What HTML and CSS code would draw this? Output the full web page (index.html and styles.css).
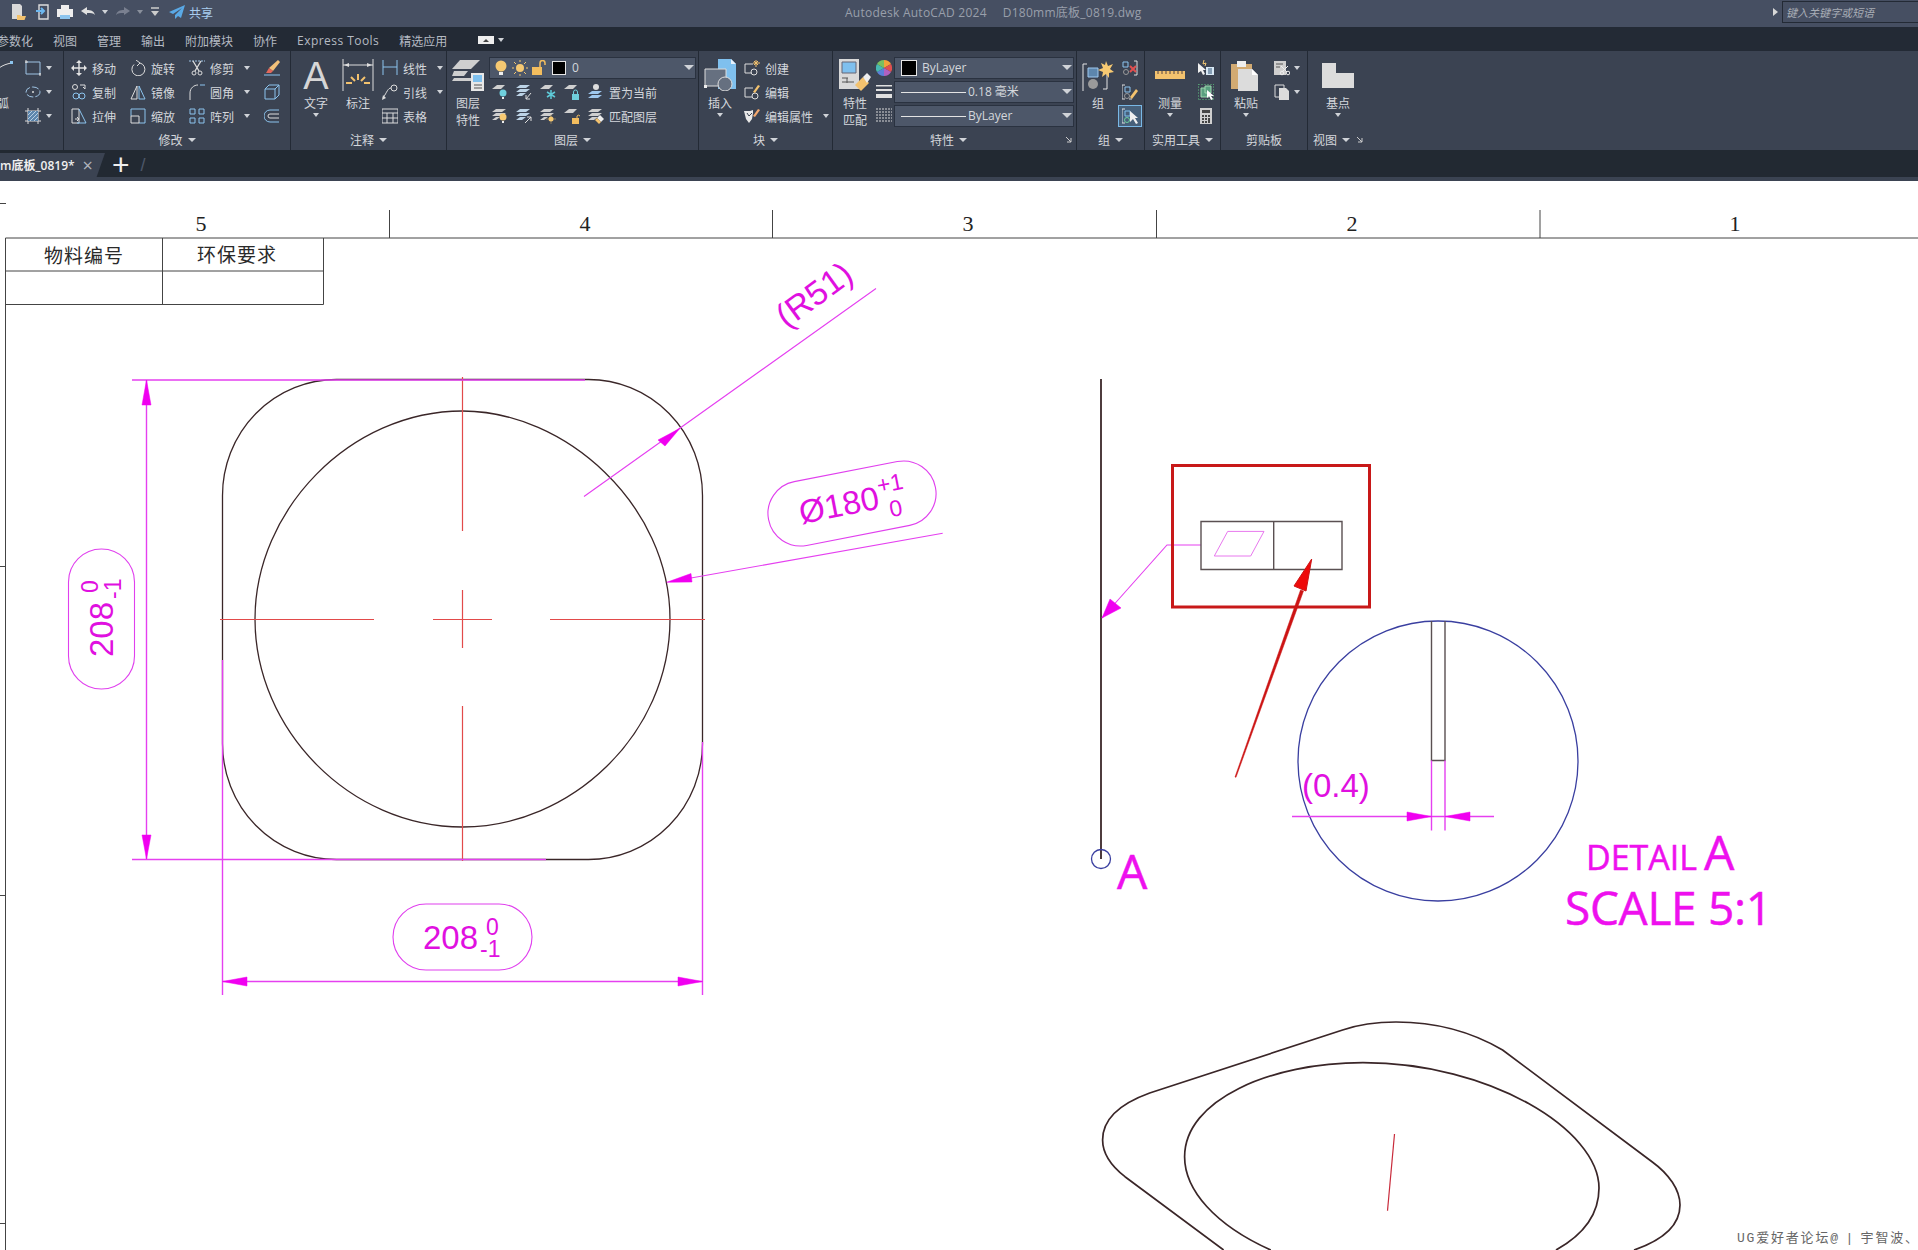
FILE: index.html
```html
<!DOCTYPE html>
<html lang="zh">
<head>
<meta charset="utf-8">
<title>Autodesk AutoCAD 2024</title>
<link rel="stylesheet" href="styles.css">
</head>
<body>
<div class="app">
<header class="titlebar">
  <div class="qat">
    <svg class="i qa1" viewBox="0 0 16 16"><path d="M2 0h8l2 2v13H2z" fill="#d9d9d9" stroke="none"/><path d="M7 11h3l1 1h5l-1.5 4H7z" fill="#f3c26e" stroke="none"/></svg>
    <svg class="i qa2" viewBox="0 0 16 16"><path d="M4 1h9v14H4z" stroke="#ddd" stroke-width="1.4"/><path d="M1 7h7M6 4l3 3-3 3" stroke="#6db8f0" stroke-width="2"/></svg>
    <svg class="i" viewBox="0 0 16 16"><path d="M4 1h8v4H4z" fill="#eee" stroke="none"/><path d="M0 5h16v8h-3v-2H3v2H0z" fill="#eee" stroke="none"/><path d="M3 11h10v4H3z" fill="#8cc4ee" stroke="none"/></svg>
    <svg class="i" viewBox="0 0 16 16"><path d="M1 7l6-4v3c4 0 7 1 8 5-2-2-4-2-8-2v2z" fill="#e0e0e0" stroke="none"/></svg>
    <i class="dd dd-q"></i>
    <svg class="i" viewBox="0 0 16 16"><path d="M15 7L9 3v3C5 6 2 7 1 11c2-2 4-2 8-2v2z" fill="#7a8090" stroke="none"/></svg>
    <i class="dd dd-q dim"></i>
    <svg class="i cust" viewBox="0 0 16 16"><path d="M4 4h8" stroke="#ccc" stroke-width="1.5"/><path d="M4 7h8l-4 5z" fill="#ccc" stroke="none"/></svg>
    <svg class="i" viewBox="0 0 16 16"><path d="M16 1L0 8l4 2 9-6-7 7v4l3-3 3 2z" fill="#5aa9e6" stroke="none"/></svg>
    <span class="share">共享</span>
  </div>
  <div class="doc">Autodesk AutoCAD 2024<span class="docname">D180mm底板_0819.dwg</span></div>
  <div class="searchwrap"><i class="tri-r"></i><div class="search">键入关键字或短语</div></div>
</header>

<nav class="menubar">
  <span>参数化</span><span>视图</span><span>管理</span><span>输出</span><span>附加模块</span><span>协作</span><span class="latin">Express Tools</span><span>精选应用</span>
  <b class="panelbtn"><i></i></b><i class="dd"></i>
</nav>

<section class="ribbon">
  <div class="panel p0">
    <div class="body">
      <div class="big big-clip">
        <div class="bi"><svg class="i32" viewBox="0 0 32 32"><path d="M14 9c4-3 8-4 12-5" stroke="#ddd"/><rect x="25" y="2" width="3" height="3" fill="#8cc4ee" stroke="none"/></svg></div>
        <span>圆弧</span>
      </div>
      <div class="col p0col">
        <div class="tool"><svg class="i" viewBox="0 0 16 16"><path d="M1 2h14v12H1z" stroke="#9fc4e4"/><path d="M0 2h3M14 14h2M1 0v3M15 13v3" stroke="#ddd"/></svg><i class="dd"></i></div>
        <div class="tool"><svg class="i" viewBox="0 0 16 16"><ellipse cx="8" cy="8" rx="7" ry="5" stroke="#9fc4e4" stroke-dasharray="7 2"/><circle cx="8" cy="8" r="1" fill="#ddd" stroke="none"/></svg><i class="dd"></i></div>
        <div class="tool"><svg class="i" viewBox="0 0 16 16"><path d="M3 0v16M13 0v16M0 3h16M0 13h16" stroke="#ddd"/><path d="M3 3h10v10H3z" fill="#5d86ad" stroke="none"/><path d="M3 7l4-4M3 11l8-8M5 13l8-8M9 13l4-4" stroke="#cfe2f2" stroke-width=".8"/></svg><i class="dd"></i></div>
      </div>
    </div>
    <div class="ptitle"></div>
  </div>

  <div class="panel p1">
    <div class="body grid-mod">
      <div class="tool"><svg class="i" viewBox="0 0 16 16"><path d="M8 1v14M1 8h14" stroke="#e4e4e4" stroke-width="1.4"/><path d="M8 0l-3 3h6zM8 16l-3-3h6zM0 8l3-3v6zM16 8l-3-3v6z" fill="#e4e4e4" stroke="none"/></svg><span>移动</span></div>
      <div class="tool"><svg class="i" viewBox="0 0 16 16"><path d="M10 3a6.500 6.500 0 1 1-6 1.500"/><path d="M6 0l4 3-3 3"/></svg><span>旋转</span></div>
      <div class="tool"><svg class="i" viewBox="0 0 16 16"><path d="M0 1h16" stroke="#9fc4e4" stroke-dasharray="2 1"/><path d="M4 1l6 10M12 1L6 11" stroke-width="1.3"/><circle cx="5" cy="13" r="2"/><circle cx="11" cy="13" r="2"/></svg><span>修剪</span><i class="dd"></i></div>
      <svg class="i" viewBox="0 0 16 16"><path d="M14 0l2 2-7 9-4-3z" fill="#f2c27a" stroke="none"/><path d="M5 8l4 3-2 2H2z" fill="#e2675a" stroke="none"/><path d="M0 15h16" stroke="#8cc4ee"/></svg>

      <div class="tool"><svg class="i" viewBox="0 0 16 16"><circle cx="4" cy="3" r="2.500"/><path d="M9 1h5v4M14 5l-2-2" stroke="#ddd"/><circle cx="5" cy="12" r="3" stroke="#8cc4ee"/><circle cx="11" cy="12" r="3" stroke="#8cc4ee"/></svg><span>复制</span></div>
      <div class="tool"><svg class="i" viewBox="0 0 16 16"><path d="M1 15L7 2v13z" stroke="#ddd"/><path d="M15 15L9 2v13z" stroke="#8cc4ee"/></svg><span>镜像</span></div>
      <div class="tool"><svg class="i" viewBox="0 0 16 16"><path d="M1 16V9c0-5 4-8 8-8" stroke="#ddd"/><path d="M11 1h5M1 13" stroke="#8cc4ee"/></svg><span>圆角</span><i class="dd"></i></div>
      <svg class="i" viewBox="0 0 16 16"><path d="M1 5h10v10H1zM1 5l4-4h10v10l-4 4M11 5l4-4" stroke="#8cc4ee"/></svg>

      <div class="tool"><svg class="i" viewBox="0 0 16 16"><path d="M1 1h7v14H1z" stroke="#ddd"/><path d="M8 1l7 14H6" stroke="#8cc4ee"/><path d="M4 11h4M6 9l2 2-2 2" stroke="#ddd"/></svg><span>拉伸</span></div>
      <div class="tool"><svg class="i" viewBox="0 0 16 16"><path d="M1 1h14v14H9" stroke="#8cc4ee"/><path d="M1 1v7" stroke="#8cc4ee"/><path d="M1 8h8v7H1z" stroke="#ddd"/></svg><span>缩放</span></div>
      <div class="tool"><svg class="i" viewBox="0 0 16 16"><path d="M1 1h5v5H1zM10 1h5v5h-5zM1 10h5v5H1zM10 10h5v5h-5z" stroke="#8cc4ee"/></svg><span>阵列</span><i class="dd"></i></div>
      <svg class="i" viewBox="0 0 16 16"><path d="M15 2H6a5.500 5.500 0 0 0 0 12h9" stroke="#8cc4ee"/><path d="M15 6H6a2 2 0 0 0 0 4h9" stroke="#ddd"/></svg>
    </div>
    <div class="ptitle">修改<i class="dd"></i></div>
  </div>

  <div class="panel p2">
    <div class="body flexbody">
      <div class="big">
        <div class="bi biga">A</div>
        <span>文字</span><i class="dd"></i>
      </div>
      <div class="big">
        <div class="bi"><svg class="i32" viewBox="0 0 32 32"><path d="M1 0v32M31 0v32M1 6h30" stroke="#ddd"/><path d="M2 6l5-2v4zM30 6l-5-2v4z" fill="#ddd" stroke="none"/><path d="M16 15v6M9 18l4 4M23 18l-4 4M4 24h6M22 24h6" stroke="#f3c26e" stroke-width="2"/></svg></div>
        <span>标注</span>
      </div>
      <div class="col">
        <div class="tool"><svg class="i" viewBox="0 0 16 16"><path d="M1 0v15M15 0v15M1 7h14" stroke="#8cc4ee"/></svg><span>线性</span><i class="dd"></i></div>
        <div class="tool"><svg class="i" viewBox="0 0 16 16"><circle cx="12" cy="4" r="3" stroke="#ddd"/><path d="M9 4C6 4 5 8 1 14" stroke="#ddd"/><path d="M0 16l1-5 3 3z" fill="#ddd" stroke="none"/></svg><span>引线</span><i class="dd"></i></div>
        <div class="tool"><svg class="i" viewBox="0 0 16 16"><path d="M0 1h16v14H0zM0 5h16M0 10h16M5 5v10M11 5v10"/></svg><span>表格</span></div>
      </div>
    </div>
    <div class="ptitle">注释<i class="dd"></i></div>
  </div>

  <div class="panel p3">
    <div class="body flexbody">
      <div class="big big2">
        <div class="bi"><svg class="i32" viewBox="0 0 32 32"><path d="M8 1h20l-9 9H0z" fill="#cfcfcf" stroke="none"/><path d="M2 12h14l-4 5H0zM2 19h18v3H0z" fill="#cfcfcf" stroke="none"/><path d="M19 14h13v18H19z" fill="#e8e8e8" stroke="none"/><path d="M21 16h9v7h-9z" fill="#7fc0ee" stroke="none"/><path d="M22 26h8M22 29h8" stroke="#555"/></svg></div>
        <span>图层</span><span>特性</span>
      </div>
      <div class="layers">
        <div class="combo lcombo">
          <svg class="i" viewBox="0 0 16 16"><circle cx="8" cy="6" r="5.500" fill="#f6c972" stroke="none"/><path d="M6 12h4v3H6z" fill="#eee" stroke="none"/></svg>
          <svg class="i" viewBox="0 0 16 16"><circle cx="8" cy="8" r="4" fill="#f6c972" stroke="none"/><path d="M8 0v2M8 14v2M0 8h2M14 8h2M2 2l2 2M12 12l2 2M14 2l-2 2M2 14l2-2" stroke="#f6c972"/></svg>
          <svg class="i" viewBox="0 0 16 16"><path d="M1 7h10v8H1z" fill="#f3bd5e" stroke="none"/><path d="M9 7V3a2.500 2.500 0 0 1 5 0v2" stroke="#f3bd5e" stroke-width="1.500"/></svg>
          <i class="swatch"></i><span>0</span><i class="dd dd-c"></i>
        </div>
        <div class="lrow">
          <svg class="i" viewBox="0 0 16 16"><path d="M5 1h8L9 5H0z" fill="#cfcfcf" stroke="none"/><circle cx="11" cy="9" r="3.500" fill="#6fd0dd" stroke="none"/><path d="M10 13h2v2h-2z" fill="#eee" stroke="none"/></svg>
          <svg class="i" viewBox="0 0 16 16"><path d="M4 1h10l-4 3H0zM4 5h10l-4 3H0zM4 9h6l-4 3H0z" fill="#bcd3e6" stroke="none"/><path d="M15 9l-5 6M10 11v4h4" stroke="#ddd"/></svg>
          <svg class="i" viewBox="0 0 16 16"><path d="M5 1h8L9 5H0z" fill="#cfcfcf" stroke="none"/><path d="M11 6v9M7 8l8 5M15 8l-8 5" stroke="#5ecad8" stroke-width="1.500"/></svg>
          <svg class="i" viewBox="0 0 16 16"><path d="M5 1h8L9 5H0z" fill="#cfcfcf" stroke="none"/><path d="M8 10h7v6H8z" fill="#6fd0dd" stroke="none"/><path d="M9.500 10V8a2 2 0 0 1 4 0v2" stroke="#6fd0dd"/></svg>
          <svg class="i" viewBox="0 0 16 16"><path d="M4 7h10l-4 3H0z" fill="#9fc8ee" stroke="none"/><path d="M4 11h10l-4 3H0z" fill="#9fc8ee" stroke="none"/><circle cx="8" cy="3" r="3" fill="#ddd" stroke="none"/></svg>
          <span>置为当前</span>
        </div>
        <div class="lrow">
          <svg class="i" viewBox="0 0 16 16"><path d="M4 1h10l-4 3H0zM4 5h10l-4 3H0zM4 9h4l-4 3H0z" fill="#cfcfcf" stroke="none"/><circle cx="11" cy="9" r="3.500" fill="#f6c972" stroke="none"/><path d="M10 13h2v2h-2z" fill="#eee" stroke="none"/></svg>
          <svg class="i" viewBox="0 0 16 16"><path d="M4 1h10l-4 3H0zM4 5h10l-4 3H0zM4 9h6l-4 3H0z" fill="#bcd3e6" stroke="none"/><path d="M9 15l6-6M11 9h4v4" stroke="#ddd"/></svg>
          <svg class="i" viewBox="0 0 16 16"><path d="M4 1h10l-4 3H0zM4 5h10l-4 3H0zM4 9h4l-4 3H0z" fill="#cfcfcf" stroke="none"/><circle cx="11" cy="11" r="2.500" fill="#f6c972" stroke="none"/><path d="M11 6.500v9M6.500 11h9" stroke="#f6c972" stroke-width=".8" stroke-dasharray="1 1"/></svg>
          <svg class="i" viewBox="0 0 16 16"><path d="M5 1h8L9 5H0z" fill="#cfcfcf" stroke="none"/><path d="M8 10h7v6H8z" fill="#f3bd5e" stroke="none"/><path d="M13 10V8a2 2 0 0 1 3 0" stroke="#f3bd5e"/></svg>
          <svg class="i" viewBox="0 0 16 16"><path d="M4 1h10l-4 3H0zM4 5h10l-4 3H0zM4 9h6l-4 3H0z" fill="#cfcfcf" stroke="none"/><path d="M9 10l3-3 4 4-3 3z" fill="#eee" stroke="none"/><path d="M9 10l4 4-2 2-4-4z" fill="#f3c26e" stroke="none"/></svg>
          <span>匹配图层</span>
        </div>
      </div>
    </div>
    <div class="ptitle">图层<i class="dd"></i></div>
  </div>

  <div class="panel p4">
    <div class="body flexbody">
      <div class="big">
        <div class="bi"><svg class="i32" viewBox="0 0 32 32"><path d="M14 0h13l5 5v25H14z" fill="#7fc0ee" stroke="none"/><path d="M27 0v5h5z" fill="#e8f2fb" stroke="none"/><path d="M1 10h21v17H1z" fill="#667080" stroke="#ddd"/><circle cx="21" cy="25" r="7" fill="#667080" stroke="#ddd"/><rect x="0" y="26" width="3" height="3" fill="#eee" stroke="none"/></svg></div>
        <span>插入</span><i class="dd"></i>
      </div>
      <div class="col">
        <div class="tool"><svg class="i" viewBox="0 0 16 16"><path d="M9 4H1v9h7" stroke="#ddd"/><circle cx="10" cy="12" r="3" stroke="#ddd"/><path d="M12 0v7M9 3h7M10 1l4 4M14 1l-4 4" stroke="#f3c26e"/></svg><span>创建</span></div>
        <div class="tool"><svg class="i" viewBox="0 0 16 16"><path d="M9 4H1v9h7" stroke="#ddd"/><circle cx="11" cy="12" r="3" stroke="#ddd"/><path d="M9 8l5-7 2 1-5 7z" fill="#f3c26e" stroke="none"/></svg><span>编辑</span></div>
        <div class="tool"><svg class="i" viewBox="0 0 16 16"><path d="M0 3h6l3-1v3l-1 6-3 4-3-4z" fill="#e8e8e8" stroke="none"/><path d="M3 5l2 3 3-3" stroke="#3b4352"/><path d="M9 8l5-7 2 1-5 7z" fill="#f3a86e" stroke="none"/></svg><span>编辑属性</span><i class="dd"></i></div>
      </div>
    </div>
    <div class="ptitle">块<i class="dd"></i></div>
  </div>

  <div class="panel p5">
    <div class="body flexbody">
      <div class="big big2">
        <div class="bi"><svg class="i32" viewBox="0 0 32 32"><path d="M0 0h20v30H0z" fill="#d9d9d9" stroke="none"/><path d="M3 3h14v11H3z" fill="#7fc0ee" stroke="#667"/><path d="M3 19h6M3 23h12M8 19v5" stroke="#555"/><path d="M16 26l8-8 6 6-8 8z" fill="#f3c26e" stroke="none"/><path d="M24 18l4-4 4 4-4 6z" fill="#eee" stroke="none"/></svg></div>
        <span>特性</span><span>匹配</span>
      </div>
      <div class="col swcol">
        <svg class="i" viewBox="0 0 16 16"><path d="M8 8V0a8 8 0 0 1 7 4z" fill="#f2a23a" stroke="none"/><path d="M8 8l7-4a8 8 0 0 1 0 8z" fill="#e05050" stroke="none"/><path d="M8 8l7 4a8 8 0 0 1-7 4z" fill="#b060c0" stroke="none"/><path d="M8 8v8a8 8 0 0 1-7-4z" fill="#5a80d8" stroke="none"/><path d="M8 8l-7 4a8 8 0 0 1 0-8z" fill="#48b8b0" stroke="none"/><path d="M8 8L1 4a8 8 0 0 1 7-4z" fill="#78c060" stroke="none"/></svg>
        <svg class="i" viewBox="0 0 16 16"><path d="M0 1h16v1.500H0zM0 5h16v2H0zM0 10h16v4H0z" fill="#e0e0e0" stroke="none"/></svg>
        <svg class="i" viewBox="0 0 16 16"><path d="M0 1h16M0 4h16M0 7h16M0 10h16M0 13h16" stroke="#d8d8d8" stroke-dasharray="2 1"/></svg>
      </div>
      <div class="combos">
        <div class="combo"><i class="swatch sw-big"></i><span>ByLayer</span><i class="dd dd-c"></i></div>
        <div class="combo"><i class="lw"></i><span>0.18 毫米</span><i class="dd dd-c"></i></div>
        <div class="combo"><i class="lw"></i><span>ByLayer</span><i class="dd dd-c"></i></div>
      </div>
    </div>
    <div class="ptitle pt-prop">特性<i class="dd"></i><svg class="launch" viewBox="0 0 8 8"><path d="M1 1l5 5M6 2v4H2" stroke="#ccc" fill="none"/></svg></div>
  </div>

  <div class="panel p6">
    <div class="body flexbody">
      <div class="big">
        <div class="bi"><svg class="i32" viewBox="0 0 32 32"><path d="M5 5H1v28h4M21 30h4v-16" stroke="#e4e4e4" fill="none"/><path d="M6 9h10v9H6z" fill="#5d86ad" stroke="#9fc8ee"/><circle cx="11" cy="25" r="5" fill="#9a9a9a" stroke="none"/><path d="M24 2l2 5 5-2-3 5 4 3-5 1 0 5-3-4-4 3 1-5-5-2 5-2-2-5 4 2z" fill="#f6c972" stroke="none"/></svg></div>
        <span>组</span>
      </div>
      <div class="col gcol">
        <svg class="i" viewBox="0 0 16 16"><path d="M12 1h3v14h-3" stroke="#ddd"/><path d="M1 2h5v5H1z" stroke="#8cc4ee"/><circle cx="4" cy="12" r="2.500" stroke="#9a9a9a"/><path d="M8 6l6 6M14 6l-6 6" stroke="#e05050" stroke-width="2"/></svg>
        <svg class="i" viewBox="0 0 16 16"><path d="M3 1H0v14h3M7 15h3" stroke="#ddd"/><path d="M3 3h5v5H3z" stroke="#8cc4ee"/><circle cx="5" cy="12" r="2.500" stroke="#9a9a9a"/><path d="M8 13l6-8 2 2-6 8z" fill="#f3c26e" stroke="none"/></svg>
        <div class="gsel"><svg class="i" viewBox="0 0 16 16"><path d="M3 1H0v14h3" stroke="#ddd"/><path d="M3 3h5v5H3z" stroke="#7fc0ee"/><circle cx="5" cy="12" r="2.500" stroke="#6fcf9f"/><path d="M8 3v11l3-3 3 5 2-1-3-5h3z" fill="#f0f0f0" stroke="none"/></svg></div>
      </div>
    </div>
    <div class="ptitle">组<i class="dd"></i></div>
  </div>

  <div class="panel p7">
    <div class="body flexbody">
      <div class="big">
        <div class="bi"><svg class="ruler" viewBox="0 0 30 8"><path d="M0 0h30v8H0z" fill="#f3c26e" stroke="none"/><path d="M3 0v3M7 0v3M11 0v3M15 0v3M19 0v3M23 0v3M27 0v3" stroke="#544"/></svg></div>
        <span>测量</span><i class="dd"></i>
      </div>
      <div class="col">
        <svg class="i" viewBox="0 0 16 16"><path d="M0 3v10l3-2 2 4 2-1-2-4h3z" fill="#f0f0f0" stroke="none"/><path d="M8 7h8v8H8z" fill="#d8e8f4" stroke="none"/><path d="M10 9h4M10 11h4M10 13h4" stroke="#357"/><path d="M6 0l-1 4 3-1-1 3" stroke="#f6c972"/></svg>
        <svg class="i" viewBox="0 0 16 16"><path d="M0 0h16v16H0z" stroke="#60c080" stroke-dasharray="2 1"/><path d="M3 4h8v9H3z" fill="#5aa080" stroke="#9fd8b0"/><path d="M7 2h6v7H7z" fill="#5aa080" stroke="#9fd8b0"/><path d="M9 6v8l2-2 2 4 2-1-2-3h3z" fill="#fff" stroke="none"/></svg>
        <svg class="i" viewBox="0 0 16 16"><path d="M2 0h12v16H2z" fill="#cfcfcf" stroke="none"/><path d="M4 2h8v3H4z" fill="#444" stroke="none"/><path d="M4 7h2v2H4zM7 7h2v2H7zM10 7h2v2h-2zM4 10h2v2H4zM7 10h2v2H7zM10 10h2v5h-2zM4 13h2v2H4zM7 13h2v2H7z" fill="#444" stroke="none"/></svg>
      </div>
    </div>
    <div class="ptitle">实用工具<i class="dd"></i></div>
  </div>

  <div class="panel p8">
    <div class="body flexbody">
      <div class="big">
        <div class="bi"><svg class="i32" viewBox="0 0 32 32"><path d="M1 5h21v25H1z" fill="#d2aa72" stroke="none"/><path d="M7 2h9v6H7z" fill="#eee" stroke="none"/><path d="M8 10h14l6 6v16H8z" fill="#dcdcdc" stroke="none"/><path d="M22 10v6h6z" fill="#fff" stroke="none"/></svg></div>
        <span>粘贴</span><i class="dd"></i>
      </div>
      <div class="col clipcol">
        <div class="tool"><svg class="i" viewBox="0 0 16 16"><path d="M0 1h12v14H0z" fill="#cfcfcf" stroke="none"/><path d="M2 4h7M2 7h4" stroke="#555"/><path d="M7 6l6 6M14 6l-6 6" stroke="#eee"/><circle cx="8" cy="13" r="1.800" stroke="#eee"/><circle cx="14" cy="13" r="1.800" stroke="#eee"/></svg><i class="dd"></i></div>
        <div class="tool"><svg class="i" viewBox="0 0 16 16"><path d="M1 1h9v12H1z" stroke="#ddd"/><path d="M5 4h7l3 3v9H5z" fill="#dcdcdc" stroke="none"/></svg><i class="dd"></i></div>
      </div>
    </div>
    <div class="ptitle"><span>剪贴板</span></div>
  </div>

  <div class="panel p9">
    <div class="body flexbody">
      <div class="big">
        <div class="bi"><svg class="i32" viewBox="0 0 32 32"><path d="M0 4h14v10h18v15H0z" fill="#dcdcdc" stroke="none"/></svg></div>
        <span>基点</span><i class="dd"></i>
      </div>
    </div>
    <div class="ptitle pt-view">视图<i class="dd"></i><svg class="launch" viewBox="0 0 8 8"><path d="M1 1l5 5M6 2v4H2" stroke="#ccc" fill="none"/></svg></div>
  </div>
</section>

<div class="tabbar">
  <div class="tab"><span>m底板_0819*</span><b class="close">×</b></div>
  <b class="plus">+</b><i class="slash">/</i>
</div>
<div class="strip"></div>

<svg class="canvas" viewBox="0 181 1918 1069">
  <!-- drawing border -->
  <path class="frame" d="M5.500 1250V238H1918M389.500 238V210M772.500 238V210M1156.500 238V210M1540 238V210M0 203.500H6M0 566.500H5M0 895.500H5M0 1223.500H5"/>
  <path class="frame" d="M5.500 271H323.500M5.500 304.500H323.500M162.500 238V304.500M323.500 238V304.500"/>
  <text class="num" x="201" y="231">5</text><text class="num" x="585" y="231">4</text><text class="num" x="968" y="231">3</text><text class="num" x="1352" y="231">2</text><text class="num" x="1735" y="231">1</text>
  <text class="cell" x="84" y="263">物料编号</text><text class="cell" x="237" y="262">环保要求</text>

  <!-- front view -->
  <rect class="ol" x="222.500" y="379.500" width="480" height="480" rx="114" ry="116"/>
  <path class="ol" d="M462.500 411C565 411 670 505 670 619C670 735 570 827 462.500 827C350 827 255 730 255 619C255 510 350 411 462.500 411Z"/>
  <path class="ctr" d="M462.500 377V531M462.500 590V648M462.500 706V861M220 619.500H374M433 619.500H492M550 619.500H705"/>

  <!-- dimensions -->
  <path class="dim" d="M132 380H585M132 859.500H546M146.500 380V859M222.500 660V995M702.500 742V995M222.500 981.500H702.500"/>
  <path class="arr" d="M146.500 380L142 405H151ZM146.500 859L142 835H151ZM222.500 981.500L247 977V986ZM702.500 981.500L678 977V986Z"/>
  <rect class="oval" x="68.500" y="549" width="66" height="140" rx="33"/>
  <g transform="translate(101 619) rotate(-90)">
    <text class="dt" x="-38" y="12">208</text><text class="dts" x="26" y="-3">0</text><text class="dts" x="20" y="20">-1</text>
  </g>
  <rect class="oval" x="393" y="904" width="139" height="66" rx="33"/>
  <text class="dt" x="423" y="949">208</text><text class="dts" x="486" y="935">0</text><text class="dts" x="480" y="957">-1</text>

  <path class="dim thin" d="M584 496.500L876 288.500M942.700 533.300L691 578"/>
  <path class="arr" d="M680 428.300L658 440L665 446ZM666.700 582.300L691 573.500L692 582Z"/>
  <text class="dtm dtr" transform="translate(821 304) rotate(-36)" x="0" y="0">(R51)</text>
  <g transform="translate(852 503.500) rotate(-11)">
    <rect class="oval" x="-85" y="-32.500" width="170" height="65" rx="32.500"/>
    <text class="dtm" x="-13" y="10.500">Ø180</text><text class="dtsm" x="41" y="-4.700">+1</text><text class="dtsm" x="42" y="20.800">0</text>
  </g>

  <!-- side view -->
  <path class="ol thick" d="M1101 379V859"/>
  <circle class="bl" cx="1101" cy="859" r="9.500"/>
  <text class="big-a" x="1117" y="889">A</text>
  <path class="dim thin" d="M1201 545H1167L1102 618"/>
  <path class="arr" d="M1102 618L1110 599L1121 608Z"/>
  <path class="ol grey" d="M1201 521.500H1342V569.500H1201ZM1273.700 521.500V569.500"/>
  <path class="par" d="M1227.700 531.400H1264L1250.700 556H1214.300Z"/>
  <rect class="redbox" x="1172.500" y="465.500" width="197" height="141.500"/>
  <path class="redline" d="M1235 777L1236 777.300L1303.500 591L1300.500 590Z"/>
  <path class="redhead" d="M1311.700 559L1294 586L1306 591Z"/>

  <!-- detail -->
  <circle class="bl" cx="1438" cy="761" r="140"/>
  <path class="ol grey" d="M1431.500 621V760.500H1445V621"/>
  <path class="dim" d="M1431.500 760.500V830.500M1445 760.500V830.500M1292 816.500H1494"/>
  <path class="arr" d="M1431.500 816.500L1407 812V821ZM1445 816.500L1470 812V821Z"/>
  <text class="dt04" x="1302" y="797">(0.4)</text>
  <text class="det" x="1586" y="870">DETAIL</text><text class="big-a" x="1704" y="870">A</text>
  <text class="scale" x="1565" y="925">SCALE 5:1</text>

  <!-- iso view -->
  <path class="ol iso" d="M1223.600 1250L1125 1176.700C1110 1165 1102.600 1152 1102.600 1140C1102.600 1118 1122 1103 1149.700 1093L1342.600 1030C1360 1024 1378 1022 1396 1022C1435 1022 1472 1032 1502.600 1050L1652 1161.700C1669 1174 1680 1190 1680 1205C1680 1226 1663 1240 1634 1250"/>
  <path class="ol iso" d="M1270.800 1250C1215 1225 1184.600 1190 1184.600 1156.700C1184.600 1100 1270 1062.700 1363 1062.700C1490 1062.700 1599 1130 1599 1188C1599 1215 1583 1235 1556 1250"/>
  <path class="isoc" d="M1394.500 1134L1387.500 1210.700"/>

  <text class="wm" x="1737" y="1242">UG爱好者论坛@ | 宇智波、</text>
</svg>
</div>
</body>
</html>
```
FILE: styles.css
```css
* { box-sizing: border-box; }
html, body { margin: 0; height: 100%; overflow: hidden; background: #fff; }
body { font-family: "Noto Sans CJK SC", "Open Sans", sans-serif; font-size: 12px; color: #d4d7dc; }
.app { width: 1918px; height: 1250px; display: flex; flex-direction: column; overflow: hidden; }
i { font-style: normal; }

.i { width: 16px; height: 16px; flex: none; fill: none; stroke: #dcdcdc; display: block; }
.i32 { width: 32px; height: 32px; fill: none; stroke: #dcdcdc; display: block; }

/* title bar */
.titlebar { height: 27px; flex: none; display: flex; align-items: center; background: #464f62; padding-bottom: 3px; }
.qat { width: 845px; display: flex; align-items: center; gap: 4px; padding-left: 10px; flex: none; }
.qat .i { margin-right: 3px; }
.qat .qa1 { margin-right: 5px; }
.qat .qa2 { margin-right: 2px; }
.qat .cust { margin-right: 2px; }
.share { color: #a9cdef; margin-left: -3px; }
.doc { font-family: "Open Sans", "Noto Sans CJK SC", sans-serif; color: #999fab; font-size: 12px; letter-spacing: .25px; white-space: nowrap; }
.docname { margin-left: 16px; }
.searchwrap { margin-left: auto; display: flex; align-items: center; gap: 4px; margin-right: -12px; }
.tri-r { width: 0; height: 0; border-left: 5px solid #d8d8d8; border-top: 4px solid transparent; border-bottom: 4px solid transparent; }
.search { width: 148px; height: 22px; border: 1px solid #232a35; background: #464f62; color: #a8adb6; font-style: italic; font-size: 11px; line-height: 20px; padding-left: 3px; }

/* menu */
.menubar { height: 24px; flex: none; background: #232a35; display: flex; align-items: center; gap: 20px; color: #b5bac3; white-space: nowrap; padding-top: 2px; }
.menubar span:first-child { margin-left: -3px; }
.menubar .latin { font-family: "Open Sans", sans-serif; letter-spacing: .45px; }
.menubar .panelbtn { width: 16px; height: 8px; background: #eee; margin-left: 11px; display: flex; align-items: center; justify-content: center; }
.panelbtn i { width: 0; height: 0; border-left: 3px solid transparent; border-right: 3px solid transparent; border-bottom: 3px solid #444; }
.menubar > .dd { margin-left: -16px; }

/* dropdown triangle */
.dd { display: block; flex: none; width: 0; height: 0; border-left: 3.500px solid transparent; border-right: 3.500px solid transparent; border-top: 4px solid #d0d3d8; }
.dd.dim { border-top-color: #8a909c; margin-right: 0; }
.dd-q { margin: 0 3px 0 -1px; }
.dd-c { margin-left: auto; margin-right: 1px; border-left-width: 5px; border-right-width: 5px; border-top-width: 5px; }

/* ribbon */
.ribbon { height: 99px; flex: none; background: #3b4352; display: flex; overflow: hidden; }
.panel { flex: none; display: flex; flex-direction: column; border-right: 1px solid #232a35; position: relative; white-space: nowrap; }
.body { flex: none; height: 77px; padding-top: 5px; }
.flexbody { display: flex; }
.ptitle { flex: 1; display: flex; align-items: center; justify-content: center; gap: 5px; color: #d4d7dc; position: relative; padding-top: 1px; }
.ptitle .dd { border-left-width: 4px; border-right-width: 4px; }
.p0 { width: 64px; } .p1 { width: 227px; } .p2 { width: 156px; } .p3 { width: 252px; } .p4 { width: 134px; }
.p5 { width: 244px; } .p6 { width: 68px; } .p7 { width: 76px; } .p8 { width: 87px; }
.p9 { flex: 1; border-right: 0; }
.p0 .body { display: flex; }

.tool { display: flex; align-items: center; gap: 5px; height: 24px; }
.tool > .dd { margin-left: 5px; }
.col { display: grid; grid-template-rows: repeat(3, 24px); align-items: center; }
.col > .i { align-self: center; }

.big { width: 32px; flex: none; display: flex; flex-direction: column; align-items: center; }
.big .bi { height: 38px; padding-top: 3px; width: 32px; }
.big span { line-height: 17px; }
.big .dd { margin-top: 2px; }
.biga { font-family: "Liberation Sans", sans-serif; font-size: 38px; line-height: 34px; color: #d6d6d6; text-align: center; }

.big-clip { width: 24px; margin-left: -15px; align-items: flex-start; }
.p0col { margin-left: 16px; }
.p0col .tool { gap: 0; }

.grid-mod { display: grid; grid-template-columns: 59px 59px 75px 16px; grid-auto-rows: 24px; padding-left: 7px; align-items: center; }

.p2 .flexbody { padding-left: 9px; gap: 10px; }
.p2 .col { margin-left: -2px; }
.p3 .flexbody { padding-left: 5px; }
.layers { margin-left: 5px; width: 207px; display: grid; grid-template-rows: repeat(3, 24px); align-items: center; }
.lrow { display: flex; align-items: center; gap: 8px; padding-left: 3px; }
.lrow span { margin-left: -3px; }
.combo { height: 22px; background: #4d5769; border: 1px solid #2a3240; display: flex; align-items: center; padding: 0 0 2px 6px; color: #d4d7dc; font-family: "Open Sans", "Noto Sans CJK SC", sans-serif; font-size: 12px; }
.combo > .i, .combo > .swatch, .combo > .lw { position: relative; top: 1px; }
.lcombo { gap: 3px; padding-left: 3px; }
.lcombo span { margin-left: 3px; }
.swatch { width: 14px; height: 14px; background: #000; border: 1px solid #e6e6e6; flex: none; margin-left: 2px; }
.sw-big { width: 16px; height: 16px; margin: 0 5px 0 0; }
.lw { width: 65px; height: 1px; background: #e4e4e4; margin-right: 2px; flex: none; }

.p4 .flexbody { padding-left: 5px; gap: 8px; }
.p5 .flexbody { padding-left: 6px; }
.swcol { margin-left: 5px; }
.combos { margin-left: 2px; width: 180px; display: grid; grid-template-rows: repeat(3, 24px); align-items: center; }
.pt-prop { padding-right: 12px; }
.launch { position: absolute; width: 8px; height: 8px; top: 8px; }
.pt-prop .launch { right: 3px; }
.pt-view { justify-content: flex-start; padding-left: 5px; }
.pt-view .launch { left: 48px; }

.p6 .flexbody { padding-left: 5px; }
.gcol { margin-left: 4px; justify-items: center; width: 24px; }
.gsel { width: 24px; height: 22px; border: 1px solid #79b8e6; background: #47607a; display: flex; align-items: center; justify-content: center; }

.p7 .flexbody { padding-left: 9px; gap: 12px; }
.ruler { width: 30px; height: 8px; display: block; margin: 12px auto 0; }
.p8 .flexbody { padding-left: 9px; gap: 12px; }
.clipcol { grid-template-rows: repeat(2, 24px); }
.clipcol .tool { gap: 0; }
.clipcol .dd { margin-left: 4px; }
.p9 .flexbody { padding-left: 14px; }

/* tabs */
.tabbar { height: 27px; flex: none; background: #222932; display: flex; align-items: flex-end; }
.tab { height: 24px; width: 105px; background: #3b4352; clip-path: polygon(0 0, 100% 0, 92% 100%, 0 100%); display: flex; align-items: center; color: #f0f0f0; font-family: "Open Sans", "Noto Sans CJK SC", sans-serif; font-weight: 600; white-space: nowrap; }
.close { margin-left: 8px; color: #b0b4bc; font-size: 18px; font-weight: 400; line-height: 1; }
.plus { margin-left: 7px; color: #eee; font-family: "Liberation Sans", sans-serif; font-size: 30px; font-weight: 400; line-height: 24px; height: 24px; }
.slash { margin-left: 11px; color: #4d5769; font-family: "Liberation Sans", sans-serif; font-size: 18px; line-height: 24px; height: 24px; }
.strip { height: 4px; flex: none; background: #3b4352; }

/* drawing */
.canvas { width: 1918px; height: 1069px; display: block; flex: none; background: #fff; }
.canvas path, .canvas rect, .canvas circle { fill: none; }
.frame { stroke: #444; stroke-width: 1; }
.num { font-family: "Liberation Serif", serif; font-size: 22px; fill: #222; text-anchor: middle; }
.cell { font-family: "Noto Sans CJK SC", sans-serif; font-size: 19px; letter-spacing: 1px; fill: #2a2a2a; text-anchor: middle; }
.ol { stroke: #3a2628; stroke-width: 1.300; }
.ol.thick { stroke-width: 1.800; }
.ol.grey { stroke: #5a5052; stroke-width: 1.400; }
.ol.iso { stroke-width: 1.700; }
.ctr { stroke: #e24a4a; stroke-width: 1.200; }
.isoc { stroke: #c82a3a; stroke-width: 1.200; }
.dim { stroke: #e540f0; stroke-width: 1.400; }
.dim.thin { stroke-width: 1.100; }
.canvas .arr { fill: #f000f0; stroke: #f000f0; stroke-width: .5; }
.oval { stroke: #e040ee; stroke-width: 1.100; }
.bl { stroke: #3a3fa0; stroke-width: 1.300; }
.par { stroke: #e878ee; stroke-width: 1; }
.redbox { stroke: #c81818; stroke-width: 3; }
.canvas .redline { fill: #cc1414; stroke: #cc1414; stroke-width: .5; }
.canvas .redhead { fill: #ee0a0a; stroke: #cc1414; stroke-width: 1; }
.dt, .dts, .dtm, .dtsm, .dt04 { font-family: "Liberation Sans", sans-serif; fill: #e010e0; }
.dt { font-size: 33px; }
.dts { font-size: 23px; }
.dtm { font-size: 33px; text-anchor: middle; }
.dtr { font-size: 34px; }
.dtsm { font-size: 23px; text-anchor: middle; }
.dt04 { font-size: 33px; }
.big-a, .det, .scale { font-family: "Open Sans", sans-serif; fill: #ee10ee; stroke: #ee10ee; stroke-width: .5; }
.big-a { font-size: 48px; }
.det { font-size: 34px; }
.scale { font-size: 46px; letter-spacing: -.3px; }
.wm { font-family: "Liberation Mono", "Noto Sans CJK SC", monospace; font-size: 13px; fill: #666; letter-spacing: 1.800px; word-spacing: -4px; }
```
